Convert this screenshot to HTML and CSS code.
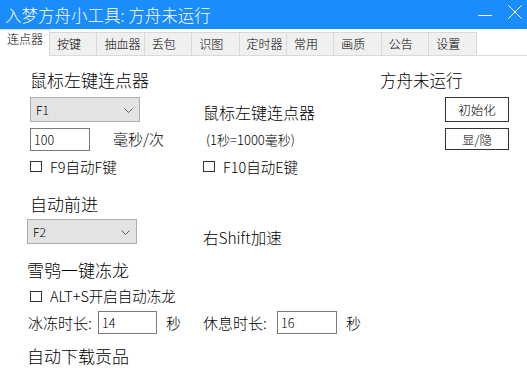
FILE: index.html
```html
<!DOCTYPE html>
<html lang="zh-CN">
<head>
<meta charset="utf-8">
<title>入梦方舟小工具</title>
<link rel="stylesheet" href="styles.css">
</head>
<body>
<div class="window">
  <div class="titlebar">
    <span class="title">入梦方舟小工具: 方舟未运行</span>
    <div class="controls">
      <svg class="ctl min" width="14" height="14" viewBox="0 0 14 14"><line x1="0" y1="7.5" x2="14" y2="7.5" stroke="#fff" stroke-width="1"/></svg>
      <svg class="ctl close" width="14" height="14" viewBox="0 0 14 14"><path d="M0.5 0.5 L13.5 13.5 M13.5 0.5 L0.5 13.5" stroke="#fff" stroke-width="1" fill="none"/></svg>
    </div>
  </div>
  <div class="tabs">
    <div class="tab active">连点器</div>
    <div class="tab">按键</div>
    <div class="tab">抽血器</div>
    <div class="tab">丢包</div>
    <div class="tab">识图</div>
    <div class="tab">定时器</div>
    <div class="tab">常用</div>
    <div class="tab">画质</div>
    <div class="tab">公告</div>
    <div class="tab">设置</div>
  </div>
  <div class="content">
    <div class="grid top">
      <div class="heading indent">鼠标左键连点器</div>
      <div></div>
      <div class="heading status">方舟未运行</div>

      <div class="select indent"><span>F1</span><svg width="9" height="5" viewBox="0 0 9 5"><path d="M0.5 0.5 L4.5 4.5 L8.5 0.5" stroke="#606060" fill="none" stroke-width="1"/></svg></div>
      <div class="label mid-title">鼠标左键连点器</div>
      <div class="btn">初始化</div>

      <div class="inrow indent"><div class="input w60">100</div><span class="label unit">毫秒/次</span></div>
      <div class="small">(1秒=1000毫秒)</div>
      <div class="btn">显/隐</div>

      <div class="check indent"><span class="box"></span><span>F9自动F键</span></div>
      <div class="check"><span class="box"></span><span>F10自动E键</span></div>
      <div></div>
    </div>

    <div class="heading h-forward indent">自动前进</div>
    <div class="grid row-f2">
      <div class="select"><span>F2</span><svg width="9" height="5" viewBox="0 0 9 5"><path d="M0.5 0.5 L4.5 4.5 L8.5 0.5" stroke="#606060" fill="none" stroke-width="1"/></svg></div>
      <div class="label shift">右Shift加速</div>
    </div>

    <div class="heading h-snow">雪鸮一键冻龙</div>
    <div class="check alt indent"><span class="box"></span><span>ALT+S开启自动冻龙</span></div>
    <div class="grid row-time">
      <div class="inrow"><span class="label lab1">冰冻时长:</span><div class="input w59">14</div><span class="label sec">秒</span></div>
      <div class="inrow"><span class="label lab2">休息时长:</span><div class="input w60">16</div><span class="label sec">秒</span></div>
    </div>

    <div class="heading h-dl">自动下载贡品</div>
  </div>
</div>
</body>
</html>
```

FILE: styles.css
```css
* { box-sizing: border-box; }
html, body { margin: 0; padding: 0; background: #fff; }
body {
  font-family: "Noto Sans CJK SC", "Noto Sans", sans-serif;
  font-weight: 300;
  color: #000;
  width: 527px;
  height: 376px;
  overflow: hidden;
}
.window { width: 527px; height: 376px; background: #fff; }

.titlebar {
  height: 29px;
  background: #1a8cfb;
  display: flex;
  align-items: center;
  padding-left: 5px;
}
.title { color: #fff; font-size: 16.5px; line-height: 20px; }
.controls { margin-left: auto; display: flex; align-items: center; height: 29px; }
.ctl { display: block; }
.min { margin-right: 16px; }
.close { margin-right: 5px; margin-top: -5px; }

.tabs {
  height: 27px;
  display: flex;
  align-items: flex-end;
  border-bottom: 1px solid #dadada;
}
.tab {
  width: 47.4px;
  height: 23px;
  background: #f0f0f0;
  border: 1px solid #d9d9d9;
  border-bottom: none;
  border-left: none;
  font-size: 12px;
  line-height: 21px;
  padding-left: 7px;
  white-space: nowrap;
  color: #000;
}
.tab.active {
  width: 50px;
  height: 27px;
  margin-bottom: -1px;
  background: #fff;
  border-left: none;
  border-right: 1px solid #d9d9d9;
  border-top: 1px solid #d9d9d9;
  line-height: 16px;
  padding-top: 1px;
  padding-left: 7px;
}

.content { padding: 12px 0 0 27px; }
.grid {
  display: grid;
  grid-template-columns: 176px 177px 1fr;
}
.top {
  grid-template-rows: 24px 25px 23px 22px;
  row-gap: 5px;
}
.top > :nth-child(n+7) { margin-top: 1px; }
.indent { margin-left: 3px; }

.heading { font-size: 17px; line-height: 24px; white-space: nowrap; }
.status { font-size: 16.5px; }
.label { font-size: 15px; line-height: 20px; white-space: nowrap; }
.small { font-size: 13px; line-height: 23px; white-space: nowrap; margin-left: 3px; }
.mid-title { align-self: end; font-size: 16px; line-height: 22px; margin-bottom: -1px; }

.select {
  width: 110px;
  height: 25px;
  background: #e3e3e3;
  border: 1px solid #acacac;
  display: flex;
  align-items: center;
  justify-content: space-between;
  padding: 0 6px 0 5px;
  font-size: 12px;
}
.select svg { display: block; margin-top: 1px; }

.inrow { display: flex; align-items: center; }
.input {
  height: 23px;
  border: 1px solid #7a7a7a;
  background: #fff;
  font-size: 12.5px;
  line-height: 21px;
  padding-left: 3px;
}
.w60 { width: 60px; }
.w59 { width: 59px; }
.unit { margin-left: 23px; }

.btn {
  margin-left: 65px;
  width: 64px;
  border: 1px solid #333;
  background: #fff;
  font-size: 12.5px;
  display: flex;
  align-items: center;
  justify-content: center;
}

.check {
  display: flex;
  align-items: center;
  font-size: 14.5px;
  line-height: 22px;
  white-space: nowrap;
}
.box {
  width: 12px;
  height: 11px;
  border: 1px solid #333;
  margin-right: 8px;
  flex: none;
}

.h-forward { margin-top: 14.5px; }
.row-f2 { margin-top: 3.5px; height: 25px; }
.shift { font-size: 15.5px; align-self: end; margin-bottom: -3px; }

.h-snow { margin-top: 13.5px; }
.alt { margin-top: 3.5px; }
.row-time { margin-top: 4px; height: 23px; }
.lab1 { width: 70px; margin-left: 1px; }
.lab2 { width: 74px; }
.sec { margin-left: 9px; }

.h-dl { margin-top: 10px; }
```
